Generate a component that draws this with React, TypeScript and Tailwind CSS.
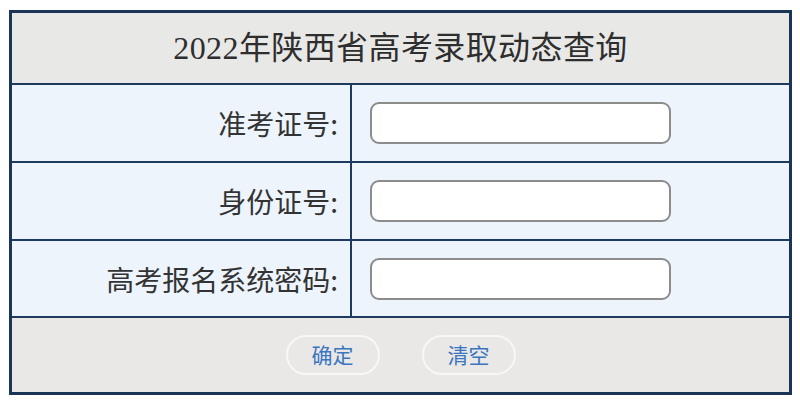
export default function App() {
  const rows = ['准考证号:', '身份证号:', '高考报名系统密码:'];

  return (
    <div className="w-[800px] h-[405px] bg-white pt-[10px] pl-[9px]">
      <div className="w-[783px] border-[3px] border-[#1b3559] font-['Noto_Sans_CJK_SC',sans-serif]">
        {/* Title */}
        <div className="h-[72px] bg-[#e8e8e7] border-b-2 border-[#1e3a5f] flex items-center justify-center">
          <h1 className="text-[32px] leading-none tracking-[0.4px] text-[#2e2e2e] font-['Liberation_Serif','Noto_Sans_CJK_SC',sans-serif]">
            2022年陕西省高考录取动态查询
          </h1>
        </div>

        {/* Form rows */}
        {rows.map((label, i) => (
          <div
            key={label}
            className={`grid grid-cols-[340px_1fr] bg-[#edf4fc] border-b-2 border-[#1e3a5f] ${i === 2 ? 'h-[77px]' : 'h-[78px]'}`}
          >
            <div className="flex items-center justify-end pr-3 border-r-2 border-[#1e3a5f] text-[28px] text-[#333333]">
              {label}
            </div>
            <div className="flex items-center pl-[18px]">
              <input
                type="text"
                className="w-[301px] h-[42px] bg-white border-2 border-[#8c8c8c] rounded-[9px] outline-none"
              />
            </div>
          </div>
        ))}

        {/* Buttons */}
        <div className="h-[74px] bg-[#e9e8e6] flex items-center justify-center gap-[42px]">
          <button className="w-[94px] h-[40px] rounded-full border-2 border-[#f7f7f7] text-[21px] text-[#3b76c0]">
            确定
          </button>
          <button className="w-[94px] h-[40px] rounded-full border-2 border-[#f7f7f7] text-[21px] text-[#3b76c0]">
            清空
          </button>
        </div>
      </div>
    </div>
  );
}
